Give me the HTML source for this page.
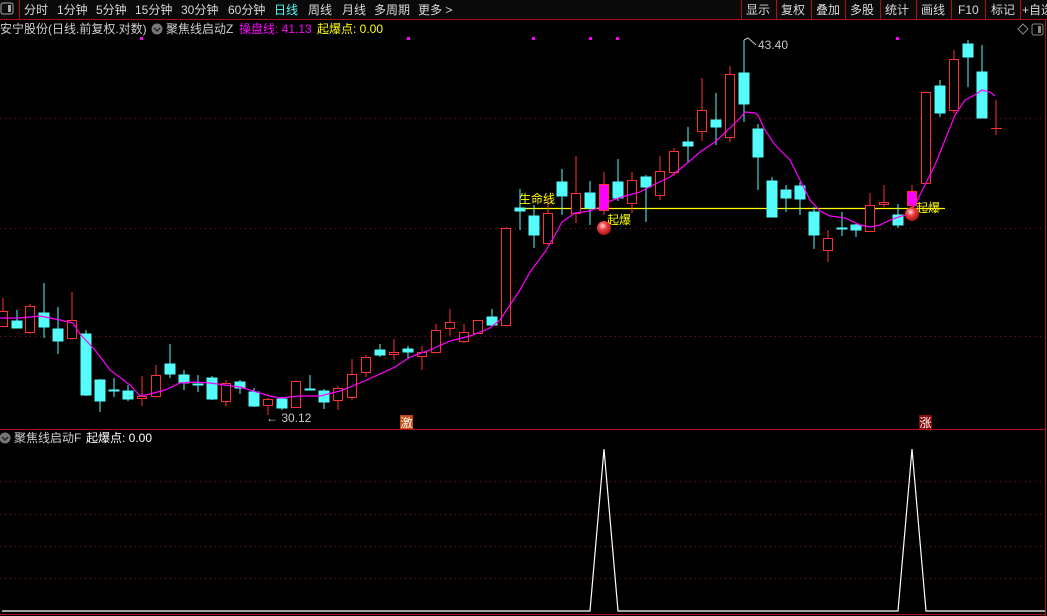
<!DOCTYPE html>
<html><head><meta charset="utf-8"><style>
body{margin:0;background:#000;width:1047px;height:616px;overflow:hidden;font-family:"Liberation Sans","Noto Sans CJK SC",sans-serif;}
svg{display:block}
text{font-family:"Liberation Sans","Noto Sans CJK SC",sans-serif;}
</style></head><body>
<svg width="1047" height="616" xmlns="http://www.w3.org/2000/svg">
<rect width="1047" height="616" fill="#000"/>
<!-- top bar -->
<rect x="0" y="0" width="1047" height="19" fill="#0a0a0a"/>
<line x1="0" y1="19.5" x2="1047" y2="19.5" stroke="#b01010"/>
<rect x="1" y="3" width="12" height="11" rx="2" fill="none" stroke="#aaa"/><rect x="8" y="5" width="3" height="7" fill="#aaa"/>
<line x1="19.5" y1="0" x2="19.5" y2="19" stroke="#b01010"/>
<g font-size="12" fill="#d8d8d8">
<text x="24" y="14">分时</text><text x="57" y="14">1分钟</text><text x="96" y="14">5分钟</text><text x="135" y="14">15分钟</text><text x="181" y="14">30分钟</text><text x="228" y="14">60分钟</text>
<text x="274" y="14" fill="#54fcfc">日线</text><text x="308" y="14">周线</text><text x="342" y="14">月线</text><text x="374" y="14">多周期</text><text x="418" y="14">更多 &gt;</text>
<text x="746" y="14">显示</text><text x="781" y="14">复权</text><text x="816" y="14">叠加</text><text x="850" y="14">多股</text><text x="885" y="14">统计</text><text x="921" y="14">画线</text><text x="958" y="14">F10</text><text x="991" y="14">标记</text><text x="1022" y="14">+自选</text>
</g>
<g stroke="#b01010"><line x1="741.5" y1="0" x2="741.5" y2="19"/><line x1="776.5" y1="0" x2="776.5" y2="19"/><line x1="811.5" y1="0" x2="811.5" y2="19"/><line x1="845.5" y1="0" x2="845.5" y2="19"/><line x1="880.5" y1="0" x2="880.5" y2="19"/><line x1="916.5" y1="0" x2="916.5" y2="19"/><line x1="951.5" y1="0" x2="951.5" y2="19"/><line x1="985.5" y1="0" x2="985.5" y2="19"/><line x1="1020.5" y1="0" x2="1020.5" y2="19"/><line x1="1045.5" y1="19" x2="1045.5" y2="616"/></g>
<!-- title line -->
<g font-size="12">
<text x="0" y="33" fill="#d0d0d0">安宁股份(日线.前复权.对数)</text>
<circle cx="157" cy="29" r="5.5" fill="#777"/><path d="M154 28 L157 31 L160 28" stroke="#222" stroke-width="1.5" fill="none"/>
<text x="166" y="33" fill="#d0d0d0">聚焦线启动Z</text>
<text x="239" y="33" fill="#ff00ff">操盘线: 41.13</text>
<text x="317" y="33" fill="#ffff00">起爆点: 0.00</text>
</g>
<path d="M1018 29 L1023 24 L1028 29 L1023 34 Z" fill="none" stroke="#888"/>
<rect x="1032" y="24" width="11" height="11" rx="2" fill="none" stroke="#888"/><rect x="1038" y="26" width="3" height="7" fill="#888"/>
<!-- grid -->
<g stroke="#8a1a1a" stroke-dasharray="1,4"><line x1="0" y1="118.5" x2="1045" y2="118.5"/><line x1="0" y1="228.5" x2="1045" y2="228.5"/><line x1="0" y1="336.5" x2="1045" y2="336.5"/>
<line x1="0" y1="481.5" x2="1045" y2="481.5"/><line x1="0" y1="514.5" x2="1045" y2="514.5"/><line x1="0" y1="546.5" x2="1045" y2="546.5"/><line x1="0" y1="578.5" x2="1045" y2="578.5"/></g>
<line x1="0" y1="429.5" x2="1045" y2="429.5" stroke="#b01010"/>
<!-- magenta dots -->
<g fill="#ff00ff"><rect x="140" y="37" width="3" height="3"/><rect x="407" y="37" width="3" height="3"/><rect x="532" y="37" width="3" height="3"/><rect x="589" y="37" width="3" height="3"/><rect x="616" y="37" width="3" height="3"/><rect x="896" y="37" width="3" height="3"/></g>
<!-- yellow line -->
<line x1="515" y1="208.5" x2="945" y2="208.5" stroke="#ffff00" stroke-width="1.2"/>
<!-- candles -->
<g stroke-width="1">
<g stroke="#54fcfc" fill="#54fcfc">
<line x1="17" y1="310" x2="17" y2="328"/><rect x="12" y="321" width="10" height="7"/>
<line x1="44" y1="283" x2="44" y2="338"/><rect x="39" y="313" width="10" height="14"/>
<line x1="58" y1="307" x2="58" y2="354"/><rect x="53" y="329" width="10" height="12"/>
<line x1="86" y1="330" x2="86" y2="396"/><rect x="81" y="334" width="10" height="61"/>
<line x1="100" y1="379" x2="100" y2="412"/><rect x="95" y="380" width="10" height="21"/>
<line x1="114" y1="378" x2="114" y2="397"/><rect x="109" y="390" width="10" height="1"/>
<line x1="128" y1="385" x2="128" y2="401"/><rect x="123" y="391" width="10" height="8"/>
<line x1="170" y1="344" x2="170" y2="378"/><rect x="165" y="364" width="10" height="10"/>
<line x1="184" y1="370" x2="184" y2="390"/><rect x="179" y="375" width="10" height="8"/>
<line x1="198" y1="375" x2="198" y2="392"/><rect x="193" y="384" width="10" height="1"/>
<line x1="212" y1="376" x2="212" y2="400"/><rect x="207" y="378" width="10" height="21"/>
<line x1="240" y1="380" x2="240" y2="394"/><rect x="235" y="382" width="10" height="6"/>
<line x1="254" y1="388" x2="254" y2="407"/><rect x="249" y="392" width="10" height="14"/>
<line x1="282" y1="397" x2="282" y2="410"/><rect x="277" y="399" width="10" height="9"/>
<line x1="310" y1="375" x2="310" y2="390"/><rect x="305" y="389" width="10" height="1"/>
<line x1="324" y1="389" x2="324" y2="409"/><rect x="319" y="391" width="10" height="11"/>
<line x1="380" y1="344" x2="380" y2="357"/><rect x="375" y="350" width="10" height="5"/>
<line x1="408" y1="346" x2="408" y2="359"/><rect x="403" y="349" width="10" height="3"/>
<line x1="492" y1="309" x2="492" y2="327"/><rect x="487" y="317" width="10" height="8"/>
<line x1="520" y1="189" x2="520" y2="230"/><rect x="515" y="208" width="10" height="3"/>
<line x1="534" y1="205" x2="534" y2="248"/><rect x="529" y="216" width="10" height="19"/>
<line x1="562" y1="169" x2="562" y2="215"/><rect x="557" y="182" width="10" height="14"/>
<line x1="590" y1="181" x2="590" y2="225"/><rect x="585" y="193" width="10" height="15"/>
<line x1="618" y1="159" x2="618" y2="201"/><rect x="613" y="182" width="10" height="16"/>
<line x1="646" y1="175" x2="646" y2="222"/><rect x="641" y="177" width="10" height="10"/>
<line x1="688" y1="127" x2="688" y2="163"/><rect x="683" y="142" width="10" height="4"/>
<line x1="716" y1="93" x2="716" y2="145"/><rect x="711" y="120" width="10" height="7"/>
<line x1="744" y1="40" x2="744" y2="122"/><rect x="739" y="73" width="10" height="31"/>
<line x1="758" y1="124" x2="758" y2="190"/><rect x="753" y="129" width="10" height="28"/>
<line x1="772" y1="177" x2="772" y2="217"/><rect x="767" y="181" width="10" height="36"/>
<line x1="786" y1="185" x2="786" y2="212"/><rect x="781" y="190" width="10" height="8"/>
<line x1="800" y1="182" x2="800" y2="215"/><rect x="795" y="186" width="10" height="13"/>
<line x1="814" y1="207" x2="814" y2="249"/><rect x="809" y="212" width="10" height="23"/>
<line x1="842" y1="212" x2="842" y2="236"/><rect x="837" y="228" width="10" height="1"/>
<line x1="856" y1="224" x2="856" y2="237"/><rect x="851" y="225" width="10" height="5"/>
<line x1="898" y1="204" x2="898" y2="228"/><rect x="893" y="215" width="10" height="10"/>
<line x1="940" y1="80" x2="940" y2="117"/><rect x="935" y="86" width="10" height="27"/>
<line x1="968" y1="40" x2="968" y2="87"/><rect x="963" y="44" width="10" height="13"/>
<line x1="982" y1="45" x2="982" y2="118"/><rect x="977" y="72" width="10" height="46"/>
</g>
<g stroke="#ff3232" fill="#000">
<line x1="3" y1="298" x2="3" y2="326"/><rect x="-1.5" y="311.5" width="9" height="15"/>
<line x1="30" y1="304" x2="30" y2="334"/><rect x="25.5" y="306.5" width="9" height="26"/>
<line x1="72" y1="292" x2="72" y2="340"/><rect x="67.5" y="320.5" width="9" height="18"/>
<line x1="142" y1="376" x2="142" y2="406"/><rect x="137.5" y="396.5" width="9" height="2"/>
<line x1="156" y1="365" x2="156" y2="396"/><rect x="151.5" y="375.5" width="9" height="21"/>
<line x1="226" y1="380" x2="226" y2="406"/><rect x="221.5" y="383.5" width="9" height="18"/>
<line x1="268" y1="398" x2="268" y2="415"/><rect x="263.5" y="399.5" width="9" height="6"/>
<line x1="296" y1="380" x2="296" y2="408"/><rect x="291.5" y="381.5" width="9" height="26"/>
<line x1="338" y1="386" x2="338" y2="410"/><rect x="333.5" y="388.5" width="9" height="12"/>
<line x1="352" y1="359" x2="352" y2="400"/><rect x="347.5" y="374.5" width="9" height="23"/>
<line x1="366" y1="355" x2="366" y2="377"/><rect x="361.5" y="357.5" width="9" height="15"/>
<line x1="394" y1="339" x2="394" y2="360"/><rect x="389.5" y="352.5" width="9" height="2"/>
<line x1="422" y1="346" x2="422" y2="370"/><rect x="417.5" y="352.5" width="9" height="4"/>
<line x1="436" y1="324" x2="436" y2="353"/><rect x="431.5" y="330.5" width="9" height="22"/>
<line x1="450" y1="309" x2="450" y2="336"/><rect x="445.5" y="322.5" width="9" height="6"/>
<line x1="464" y1="324" x2="464" y2="343"/><rect x="459.5" y="332.5" width="9" height="9"/>
<line x1="478" y1="320" x2="478" y2="333"/><rect x="473.5" y="320.5" width="9" height="13"/>
<line x1="506" y1="227" x2="506" y2="326"/><rect x="501.5" y="228.5" width="9" height="97"/>
<line x1="548" y1="198" x2="548" y2="245"/><rect x="543.5" y="213.5" width="9" height="30"/>
<line x1="576" y1="156" x2="576" y2="223"/><rect x="571.5" y="193.5" width="9" height="20"/>
<line x1="604" y1="172" x2="604" y2="215"/><rect x="599.5" y="184.5" width="9" height="26" fill="#ff00ff"/>
<line x1="632" y1="172" x2="632" y2="213"/><rect x="627.5" y="180.5" width="9" height="23"/>
<line x1="660" y1="156" x2="660" y2="200"/><rect x="655.5" y="171.5" width="9" height="24"/>
<line x1="674" y1="148" x2="674" y2="176"/><rect x="669.5" y="151.5" width="9" height="21"/>
<line x1="702" y1="78" x2="702" y2="141"/><rect x="697.5" y="110.5" width="9" height="21"/>
<line x1="730" y1="66" x2="730" y2="142"/><rect x="725.5" y="74.5" width="9" height="63"/>
<line x1="828" y1="230" x2="828" y2="262"/><rect x="823.5" y="238.5" width="9" height="12"/>
<line x1="870" y1="193" x2="870" y2="231"/><rect x="865.5" y="205.5" width="9" height="26"/>
<line x1="884" y1="185" x2="884" y2="207"/><rect x="879.5" y="202.5" width="9" height="2"/>
<line x1="912" y1="185" x2="912" y2="210"/><rect x="907.5" y="191.5" width="9" height="14" fill="#ff00ff"/>
<rect x="921.5" y="92.5" width="9" height="91"/>
<line x1="954" y1="50" x2="954" y2="113"/><rect x="949.5" y="59.5" width="9" height="51"/>
<line x1="996" y1="100" x2="996" y2="135"/><line x1="991" y1="128.5" x2="1002" y2="128.5"/>
</g>
</g>
<!-- MA line -->
<polyline fill="none" stroke="#ff00ff" stroke-width="1.2" points="0,318 20,318 30,317 40,316 60,320 73,323 80,334 95,350 110,370 130,385 140,396 150,394 165,390 180,383 195,382 210,383 240,387 250,390 270,396 280,398 300,396 320,396 340,391 360,383 380,374 395,367 410,357 430,350 450,341 470,336 490,328 500,320 510,305 520,290 530,272 545,252 555,235 562,222 575,213 590,211 600,207 610,201 625,196 640,192 655,184 670,177 685,165 700,152 715,142 730,128 740,118 745,112 755,113 758,115 765,130 775,145 790,160 800,180 810,200 820,211 830,216 845,218 860,225 870,227 880,225 890,220 905,215 915,205 925,185 935,165 945,140 955,115 965,100 975,95 982,90 990,92 995,96"/>
<!-- labels -->
<g font-size="12">
<text x="519" y="203" fill="#ffff00">生命线</text>
<text x="607" y="224" fill="#ffff00">起爆</text>
<text x="916" y="212" fill="#ffff00">起爆</text>
<text x="266" y="422" fill="#c8c8c8">← 30.12</text>
<text x="758" y="49" fill="#c8c8c8">43.40</text>
</g>
<path d="M744 40 L748 38 L756 45" stroke="#c8c8c8" fill="none"/>
<defs><radialGradient id="b" cx="0.4" cy="0.35" r="0.7"><stop offset="0" stop-color="#ffe0e0"/><stop offset="0.4" stop-color="#f04040"/><stop offset="1" stop-color="#a01010"/></radialGradient></defs>
<circle cx="604" cy="228" r="7" fill="url(#b)"/><circle cx="912" cy="214" r="7" fill="url(#b)"/>
<rect x="400" y="415" width="13" height="14" fill="#c04a10"/><text x="400.5" y="427" font-size="12" fill="#fff">激</text>
<rect x="919" y="415" width="13" height="14" fill="#8a0a0a"/><text x="919.5" y="427" font-size="12" fill="#fff">涨</text>
<!-- lower panel -->
<circle cx="5" cy="438" r="5.5" fill="#777"/><path d="M2 437 L5 440 L8 437" stroke="#222" stroke-width="1.5" fill="none"/>
<text x="14" y="442" font-size="12" fill="#d0d0d0">聚焦线启动F</text>
<text x="86" y="442" font-size="12" fill="#fff">起爆点: 0.00</text>
<polyline fill="none" stroke="#fff" stroke-width="1.2" points="2,611 590,611 604,449 618,611 898,611 912,449 926,611 1045,611"/>
<line x1="0" y1="614.5" x2="1045" y2="614.5" stroke="#b01010"/>
</svg>
</body></html>
